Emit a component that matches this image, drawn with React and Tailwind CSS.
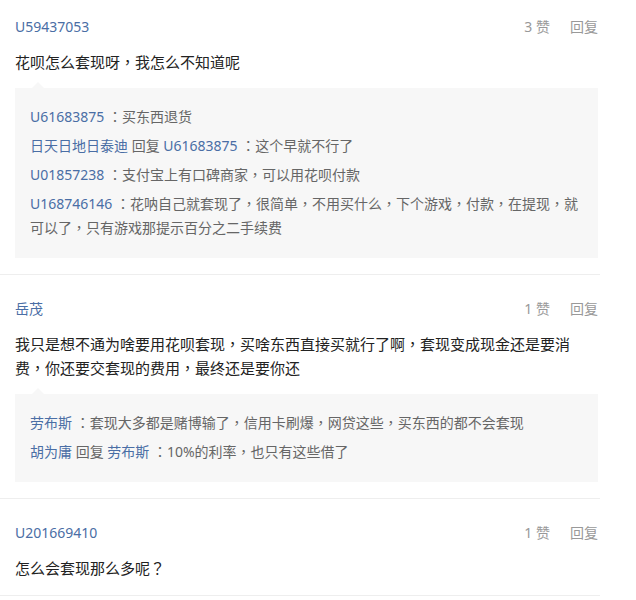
import React from 'react';

const comments = [
  {
    user: 'U59437053',
    likes: 3,
    text: '花呗怎么套现呀，我怎么不知道呢',
    replies: [
      { from: 'U61683875', text: '买东西退货' },
      { from: '日天日地日泰迪', to: 'U61683875', text: '这个早就不行了' },
      { from: 'U01857238', text: '支付宝上有口碑商家，可以用花呗付款' },
      { from: 'U168746146', text: '花呐自己就套现了，很简单，不用买什么，下个游戏，付款，在提现，就可以了，只有游戏那提示百分之二手续费' },
    ],
  },
  {
    user: '岳茂',
    likes: 1,
    text: '我只是想不通为啥要用花呗套现，买啥东西直接买就行了啊，套现变成现金还是要消费，你还要交套现的费用，最终还是要你还',
    replies: [
      { from: '劳布斯', text: '套现大多都是赌博输了，信用卡刷爆，网贷这些，买东西的都不会套现' },
      { from: '胡为庸', to: '劳布斯', text: '10%的利率，也只有这些借了' },
    ],
  },
  {
    user: 'U201669410',
    likes: 1,
    text: '怎么会套现那么多呢？',
    replies: [],
  },
];

// full-width punctuation sits centred in the TC cut, like the original
function Txt({ s }) {
  return s.split(/([，：？])/).map((part, i) =>
    /^[，：？]$/.test(part) ? (
      <span key={i} className="font-['Noto_Sans_CJK_TC'] leading-none">{part}</span>
    ) : (
      part
    )
  );
}

function Reply({ r }) {
  return (
    <div className="leading-[24px] text-[14px] text-[#666]">
      <span className="text-[#4a6ea5]">{r.from}</span>
      {r.to && (
        <>
          {' '}回复 <span className="text-[#4a6ea5]">{r.to}</span>
        </>
      )}
      {' '}
      <Txt s={'：' + r.text} />
    </div>
  );
}

function Comment({ c, first }) {
  return (
    <div className={`border-b border-[#eeeeee] pl-[15px] pr-[2px] pb-[15px] ${first ? 'pt-[15px]' : 'pt-[22px]'}`}>
      <div className="flex items-center justify-between leading-[24px] text-[14px]">
        <span className="text-[#4a6ea5]">{c.user}</span>
        <div className="flex gap-[20px] text-[#999]">
          <span>{c.likes} 赞</span>
          <span>回复</span>
        </div>
      </div>
      <p className="mt-[11px] text-[15px] leading-[24px] text-[#222]">
        <Txt s={c.text} />
      </p>
      {c.replies.length > 0 && (
        <div className="relative mt-[14px] mb-px bg-[#f7f7f7] px-[15px] pt-[17px] pb-[18px] flex flex-col gap-[5px]">
          <div className="absolute -top-[6px] left-[17px] h-0 w-0 border-x-[6px] border-b-[6px] border-x-transparent border-b-[#f7f7f7]" />
          {c.replies.map((r, i) => (
            <Reply key={i} r={r} />
          ))}
        </div>
      )}
    </div>
  );
}

export default function App() {
  return (
    <div className="min-h-[600px] bg-white" style={{ fontFamily: '"Noto Sans", "Noto Sans CJK SC", sans-serif' }}>
      <div className="w-[600px]">
        {comments.map((c, i) => (
          <Comment key={i} c={c} first={i === 0} />
        ))}
      </div>
    </div>
  );
}
